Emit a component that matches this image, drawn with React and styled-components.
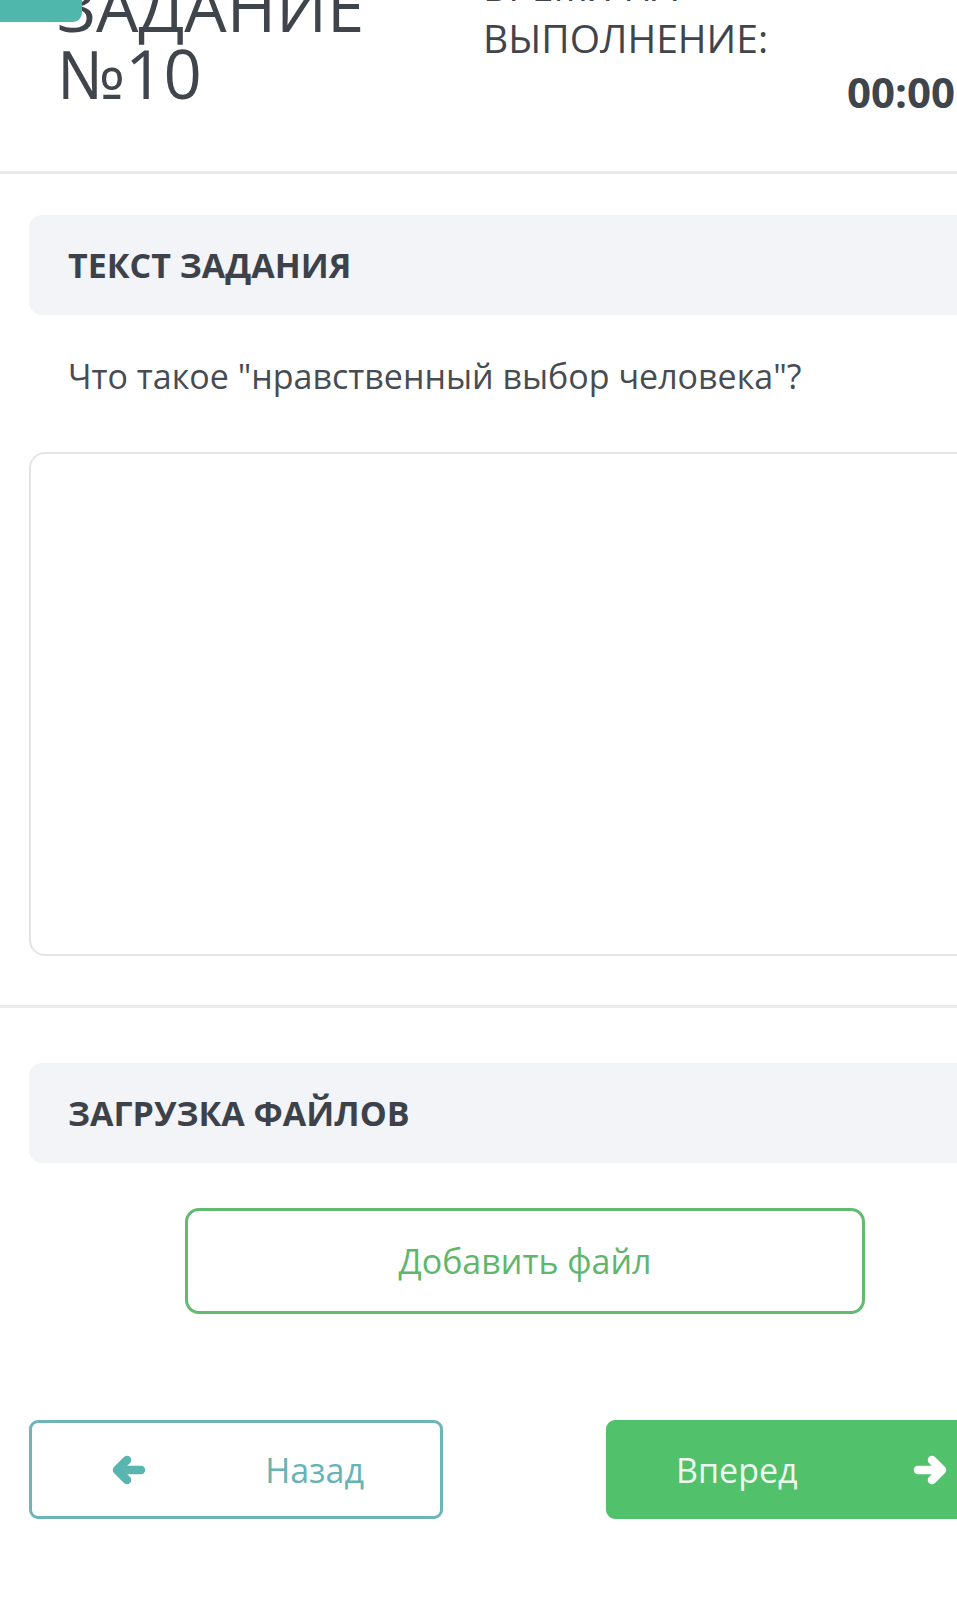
import React from 'react'
import styled, { createGlobalStyle } from 'styled-components'

const GlobalStyle = createGlobalStyle`
	html, body {
		margin: 0;
		padding: 0;
		background: #fff;
		overflow-x: hidden;
	}
	body {
		font-family: "Open Sans", "Noto Sans", sans-serif;
		color: #3f444b;
	}
`

// thick rounded arrow, like the old font-awesome one
const Arrow = ({ dir = 'left' }) => (
	<ArrowSvg viewBox="0 0 34 30" width="34" height="30" $flip={dir === 'right'}>
		<g fill="none" stroke="currentColor" strokeLinecap="round" strokeLinejoin="round" strokeWidth="8.5">
			<polyline points="15,5 5,15 15,25" />
			<line x1="7" y1="15" x2="29" y2="15" />
		</g>
	</ArrowSvg>
)

const App = () => {
	return (
		<>
			<GlobalStyle />
			<Page>
				<TopTab />
				<Header>
					<TaskTitle>
						ЗАДАНИЕ
						<br />
						№10
					</TaskTitle>
					<TimerBlock>
						<TimerLabel>
							ВРЕМЯ НА
							<br />
							ВЫПОЛНЕНИЕ:
						</TimerLabel>
						<TimerValue>00:00</TimerValue>
					</TimerBlock>
				</Header>
				<Divider />

				<Content>
					<SectionHead>ТЕКСТ ЗАДАНИЯ</SectionHead>
					<Question>Что такое "нравственный выбор человека"?</Question>
					<Answer />
				</Content>
				<Divider $top={49} />

				<Content>
					<SectionHead $top={55}>ЗАГРУЗКА ФАЙЛОВ</SectionHead>
					<AddFile>Добавить файл</AddFile>
					<NavRow>
						<NavButton $variant="back">
							<Arrow dir="left" />
							<span>Назад</span>
						</NavButton>
						<NavButton $variant="next">
							<span>Вперед</span>
							<Arrow dir="right" />
						</NavButton>
					</NavRow>
				</Content>
			</Page>
		</>
	)
}

const ArrowSvg = styled.svg`
	display: block;
	transform: ${p => (p.$flip ? 'scaleX(-1)' : 'none')};
`

const Page = styled.div`
	position: relative;
	width: 957px;
	min-height: 1612px;
	overflow: hidden;
`

const TopTab = styled.div`
	position: absolute;
	top: 0;
	left: 0;
	width: 82px;
	height: 22px;
	background: #50b7ad;
	border-bottom-right-radius: 9px;
	z-index: 2;
`

const Header = styled.div`
	display: flex;
	align-items: flex-start;
	height: 211px;
	margin-top: -40px;
`

const TaskTitle = styled.h1`
	margin: 13px 0 0 57px;
	width: 426px;
	font-size: 67px;
	line-height: 67px;
	font-weight: 400;
	color: #40454c;
`

const TimerBlock = styled.div`
	display: flex;
	flex-direction: column;
	width: 472px;
`

const TimerLabel = styled.div`
	font-size: 39px;
	line-height: 52px;
	font-weight: 400;
	color: #40454c;
`

const TimerValue = styled.div`
	margin-top: 3px;
	text-align: right;
	font-size: 42px;
	line-height: 50px;
	font-weight: 700;
	color: #40454c;
`

const Divider = styled.hr`
	margin: ${p => p.$top || 0}px 0 0;
	border: 0;
	height: 3px;
	width: 100%;
	background: #ebebeb;
`

const Content = styled.div`
	display: flex;
	flex-direction: column;
	width: 992px;
	margin-left: 29px;
`

const SectionHead = styled.div`
	display: flex;
	align-items: center;
	height: 100px;
	margin-top: ${p => p.$top || 41}px;
	padding-left: 39px;
	border-radius: 13px;
	background: #f3f4f7;
	font-size: 34px;
	font-weight: 700;
	color: #3d424a;
`

const Question = styled.p`
	margin: 36px 0 0 39px;
	font-size: 34px;
	line-height: 51px;
	color: #474c53;
`

const Answer = styled.div`
	margin-top: 50px;
	height: 504px;
	box-sizing: border-box;
	border: 2px solid #e4e4e4;
	border-radius: 16px;
`

const AddFile = styled.button`
	align-self: center;
	margin-top: 45px;
	width: 680px;
	height: 106px;
	border: 3px solid #63bb6f;
	border-radius: 14px;
	background: #fff;
	font-family: "Open Sans", sans-serif;
	font-size: 34px;
	color: #5fb76b;
`

const NavRow = styled.div`
	display: flex;
	gap: 163px;
	margin-top: 106px;
`

const NavButton = styled.button`
	display: flex;
	align-items: center;
	justify-content: space-between;
	width: 414px;
	height: 99px;
	padding: ${p => (p.$variant === 'next' ? '0 70px 0 67px' : '0 76px 0 80px')};
	box-sizing: border-box;
	border-radius: 9px;
	font-family: "Open Sans", sans-serif;
	font-size: 34px;
	border: 3px solid ${p => (p.$variant === 'next' ? '#52c16b' : '#6db5b7')};
	background: ${p => (p.$variant === 'next' ? '#52c16b' : '#fff')};
	color: ${p => (p.$variant === 'next' ? '#eef8ef' : '#66b4b4')};

	svg {
		color: ${p => (p.$variant === 'next' ? '#fff' : '#59b5b0')};
	}
`

export default App
